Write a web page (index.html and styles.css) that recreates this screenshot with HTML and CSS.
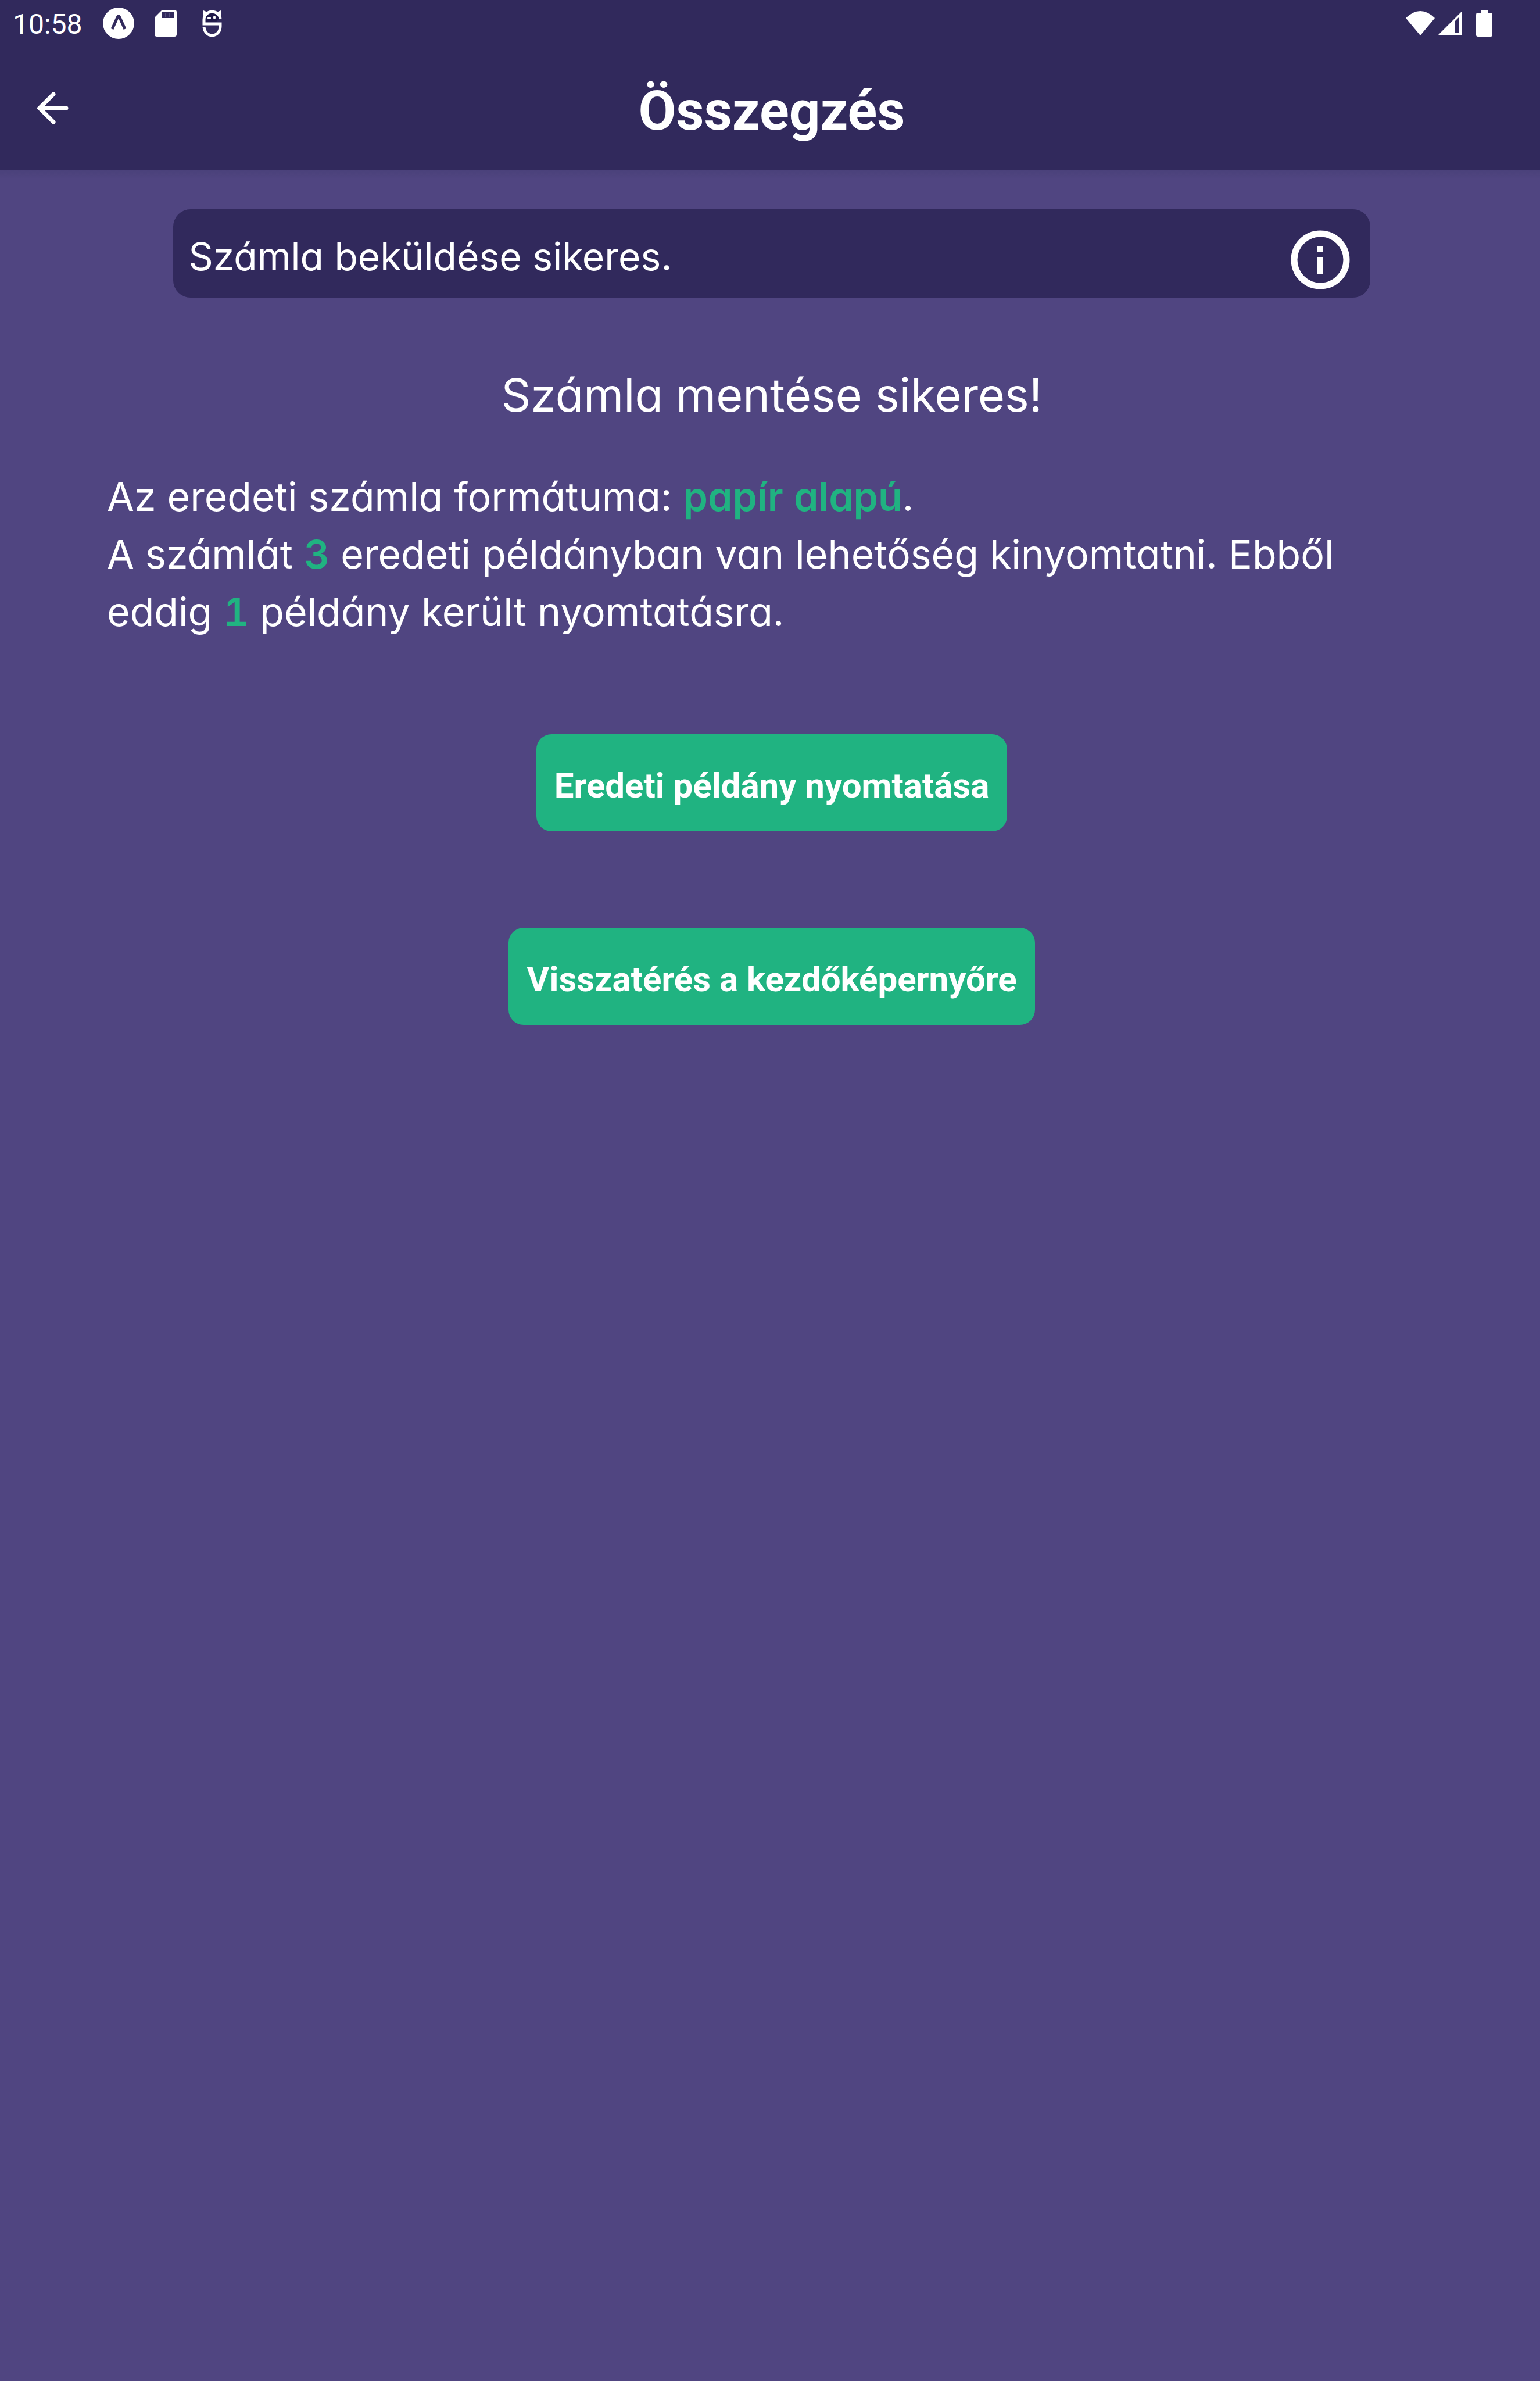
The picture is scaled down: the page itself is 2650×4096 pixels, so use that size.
FILE: index.html
```html
<!DOCTYPE html>
<html lang="hu">
<head>
<meta charset="utf-8">
<meta name="viewport" content="width=device-width, initial-scale=1">
<title>Összegzés</title>
<link rel="stylesheet" href="styles.css">
</head>
<body>
<header class="header">
  <div class="status">
    <div class="status-left">
      <time class="clock">10:58</time>
      <svg class="icon-expo" viewBox="0 0 54 54" aria-hidden="true"><circle cx="27" cy="27" r="27" fill="#fff"/><path d="M16 37L25 17Q27 13 29 17L38 37" fill="none" stroke="#31295c" stroke-width="5" stroke-linejoin="round"/></svg>
      <svg class="icon-sd" viewBox="0 0 38 46" aria-hidden="true"><path d="M13 0H34Q38 0 38 4V42Q38 46 34 46H4Q0 46 0 42V13Z" fill="#fff"/><path d="M13 4h20v10h-20z" fill="#31295c"/><path d="M19 5v8M26 5v8" stroke="#77739a" stroke-width="1"/></svg>
      <svg class="icon-debug" viewBox="0 0 34 46" aria-hidden="true"><path d="M4 20C4 8 9 3 17 3C25 3 29 8 30 15L23 21H4Z" fill="#211a4a"/><path d="M31 15C29 -1 3 -1 3 17V24H31V28C31 49 4 49 3 29" fill="none" stroke="#fff" stroke-width="5"/><path d="M2 10V1L9 4ZM32 10V1L25 4Z" fill="#fff"/><ellipse cx="12" cy="14" rx="3" ry="2" fill="#fff"/><ellipse cx="21" cy="13" rx="2" ry="3" fill="#fff"/></svg>
    </div>
    <div class="status-right">
      <svg class="icon-wifi" viewBox="0 0 50 42" aria-hidden="true"><path d="M0 12Q25 -12 50 12L25 42Z" fill="#fff"/></svg>
      <svg class="icon-signal" viewBox="0 0 42 42" aria-hidden="true"><path d="M42 0V42H0ZM37 10L29 18V37H37Z" fill="#fff" fill-rule="evenodd"/></svg>
      <svg class="icon-battery" viewBox="0 0 28 46" aria-hidden="true"><path d="M8 0H20V5H25Q28 5 28 8V43Q28 46 25 46H3Q0 46 0 43V8Q0 5 3 5H8Z" fill="#fff"/></svg>
    </div>
  </div>
  <div class="toolbar">
    <button class="back" type="button" aria-label="Vissza"><svg viewBox="0 0 54 54" aria-hidden="true"><path d="M28 3L4 27L28 51M5 27H50" fill="none" stroke="#fff" stroke-width="7" stroke-linecap="round" stroke-linejoin="miter"/></svg></button>
    <h1 class="title">Összegzés</h1>
  </div>
</header>
<main class="content">
  <div class="banner" role="status">
    <p class="banner-text">Számla beküldése sikeres.</p>
    <svg class="icon-info" viewBox="0 0 120 120" aria-hidden="true"><circle cx="60" cy="60" r="45" fill="none" stroke="#fff" stroke-width="11"/><path d="M55 36h10v11h-10zM55 55h10v30h-10z" fill="#fff"/></svg>
  </div>
  <h2 class="saved">Számla mentése sikeres!</h2>
  <div class="details">
    <p>Az eredeti számla formátuma: <strong>papír alapú</strong>.</p>
    <p>A számlát <strong>3</strong> eredeti példányban van lehetőség kinyomtatni. Ebből eddig <strong>1</strong> példány került nyomtatásra.</p>
  </div>
  <div class="actions">
    <button class="action" type="button">Eredeti példány nyomtatása</button>
    <button class="action" type="button">Visszatérés a kezdőképernyőre</button>
  </div>
</main>
</body>
</html>
```
FILE: styles.css
```css
* { box-sizing: border-box; }

body {
  margin: 0;
  min-height: 100vh;
  background: #504581;
  color: #fff;
  font-family: Inter, "Noto Sans", sans-serif;
  font-feature-settings: "cv11";
}

h1, h2, p { margin: 0; }
svg { display: block; flex: none; }

.header { background: #31295c; font-family: Roboto, sans-serif; }

.status {
  display: flex;
  justify-content: space-between;
  height: 80px;
  padding: 0 82px 0 22px;
}
.status-left, .status-right { display: flex; align-items: center; }
.clock { width: 155px; padding-top: 4px; font-size: 48px; line-height: 80px; }
.icon-expo { width: 54px; height: 54px; margin-right: 35px; }
.icon-sd { width: 38px; height: 46px; margin-right: 44px; }
.icon-debug { width: 34px; height: 46px; }
.icon-wifi { width: 50px; height: 42px; margin-right: 5px; }
.icon-signal { width: 42px; height: 42px; margin-right: 24px; }
.icon-battery { width: 28px; height: 46px; }

.toolbar {
  display: grid;
  grid-template-columns: 200px 1fr 200px;
  align-items: center;
  height: 212px;
}
.back { justify-self: start; margin-left: 64px; padding: 0; border: 0; background: none; }
.back svg { width: 54px; height: 54px; }
.title { padding: 10px 0 0 6px; font-size: 94px; line-height: 110px; text-align: center; }

.content {
  display: flex;
  flex-direction: column;
  align-items: center;
  padding: 68px 178px 0 184px;
  background: linear-gradient(#4a417a, #504581 16px);
}

.banner {
  display: flex;
  justify-content: space-between;
  align-items: flex-start;
  width: 90%;
  min-height: 152px;
  padding: 27px 26px 5px;
  border-radius: 30px;
  background: #31295c;
}
.banner-text { font-size: 66px; line-height: 108px; }
.icon-info { width: 120px; height: 120px; }

.saved { margin-top: 117px; font-size: 79px; font-weight: 400; line-height: 100px; }

.details { align-self: stretch; max-width: 2200px; margin-top: 76px; font-size: 68px; line-height: 99px; }
.details strong { color: #20b381; font-weight: 600; font-feature-settings: "cv11", "tnum"; }

.actions {
  display: flex;
  flex-direction: column;
  align-items: center;
  gap: 166px;
  margin-top: 161px;
}
.action {
  padding: 54px 31px 43px;
  border: 0;
  border-radius: 26px;
  background: #20b381;
  color: #fff;
  font: 700 60px/70px Roboto, sans-serif;
}
```
